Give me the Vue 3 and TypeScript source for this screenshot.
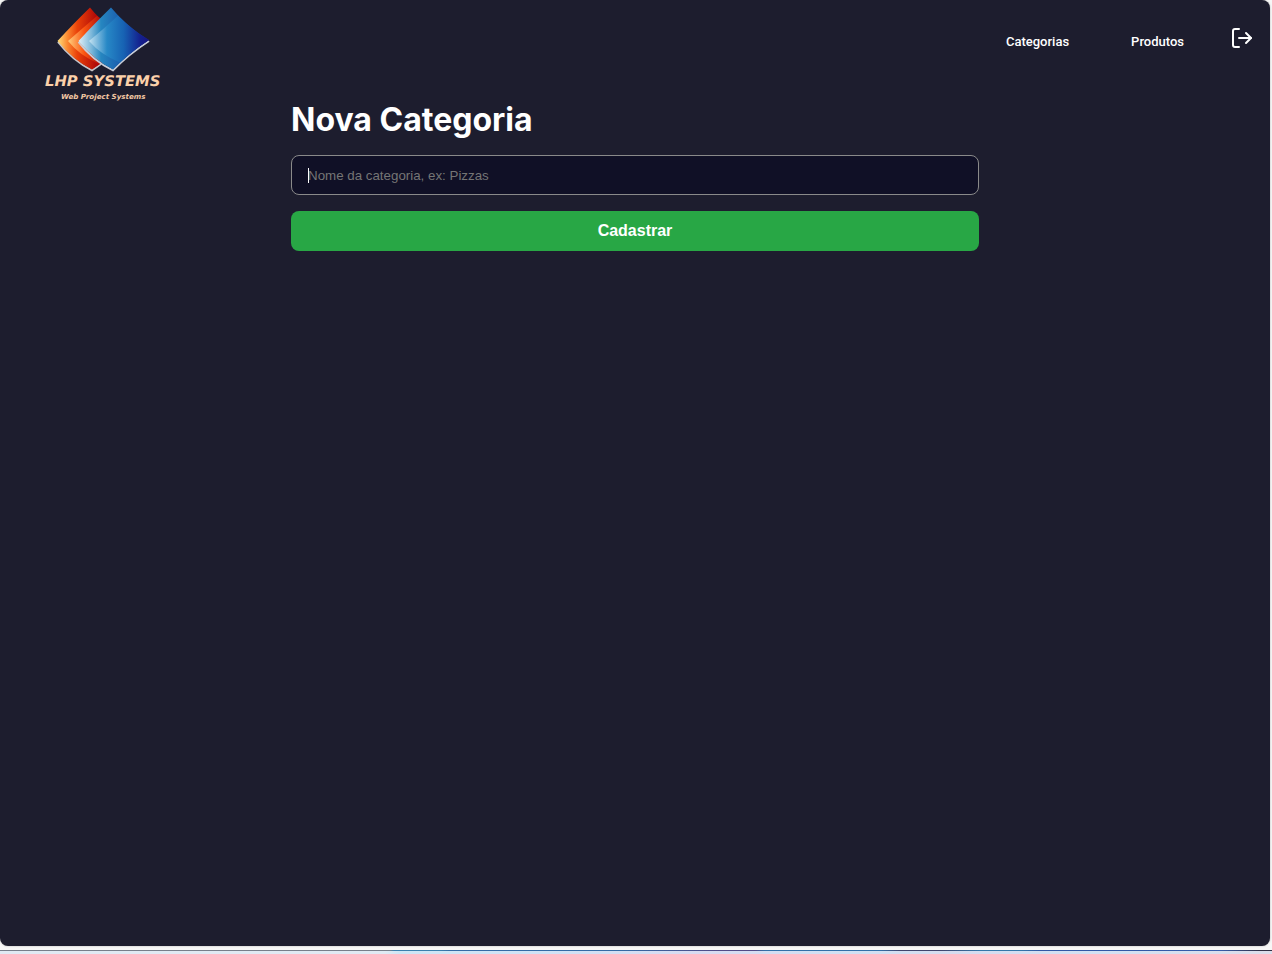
<script setup lang="ts">
import { ref } from 'vue'

const name = ref<string>('')
const links: string[] = ['Categorias', 'Produtos']
</script>

<template>
  <div class="screen">
    <div class="window">
      <header class="header">
        <svg class="logo" width="130" height="104" viewBox="35 0 130 104">
          <defs>
            <linearGradient id="redBack" x1="0" x2="1" y1="0" y2="0">
              <stop offset="0" stop-color="#ffe07c" />
              <stop offset="0.18" stop-color="#fb8a32" />
              <stop offset="0.36" stop-color="#ea4209" />
              <stop offset="0.72" stop-color="#b00808" />
            </linearGradient>
            <linearGradient id="redFront" x1="0" x2="1" y1="0" y2="0">
              <stop offset="0" stop-color="#ffd07d" />
              <stop offset="0.4" stop-color="#fb5612" />
              <stop offset="0.85" stop-color="#ad0508" />
            </linearGradient>
            <linearGradient id="blueBack" x1="0" x2="1" y1="0" y2="0">
              <stop offset="0" stop-color="#e0eef6" />
              <stop offset="0.18" stop-color="#7fb9da" />
              <stop offset="0.32" stop-color="#2686c0" />
              <stop offset="0.72" stop-color="#154aa6" />
              <stop offset="1" stop-color="#161b87" />
            </linearGradient>
            <linearGradient id="blueFront" x1="0" x2="1" y1="0" y2="0">
              <stop offset="0" stop-color="#c5e3f1" />
              <stop offset="0.3" stop-color="#2788c6" />
              <stop offset="0.58" stop-color="#1762b3" />
              <stop offset="0.85" stop-color="#14218f" />
              <stop offset="1" stop-color="#171582" />
            </linearGradient>
          </defs>
          <path d="M58 42Q73 61 92 70.300L101 64" fill="none" stroke="#c5c3c8" stroke-width="2" />
          <path d="M90 7.500Q75 22 57.500 41Q73 60 92 69.500L112 56V28Q99 19 90 7.500Z" fill="url(#redBack)" />
          <path d="M97 16Q84 27 68 41Q79 55 99 64L108 57V24Z" fill="url(#redFront)" />
          <path d="M78.500 42Q93 61 113 70.300Q129 54 149 41" fill="none" stroke="#c8cdd8" stroke-width="2" />
          <path d="M111 7.500Q96 22 78.500 41Q94 60 113 69.500Q129 53 149 40Q127 27 111 7.500Z" fill="url(#blueBack)" />
          <path d="M118 15.500Q106 27 89 41Q101 55 120 62.500Q134 49.500 149 40Q132 30 118 15.500Z" fill="url(#blueFront)" />
          <text class="brand" x="45" y="85.800" textLength="115.500" lengthAdjust="spacingAndGlyphs">LHP SYSTEMS</text>
          <text class="tagline" x="61" y="99.200" textLength="84.500" lengthAdjust="spacingAndGlyphs">Web Project Systems</text>
        </svg>
        <nav class="nav">
          <a v-for="link in links" :key="link" class="link">{{ link }}</a>
          <button class="logout" aria-label="Sair">
            <svg width="24" height="24" viewBox="0 0 24 24" fill="none" stroke="currentColor" stroke-width="2" stroke-linecap="round" stroke-linejoin="round">
              <path d="M9 21H5a2 2 0 0 1-2-2V5a2 2 0 0 1 2-2h4" />
              <path d="M16 17l5-5-5-5" />
              <path d="M21 12H9" />
            </svg>
          </button>
        </nav>
      </header>
      <main class="content">
        <h1>Nova Categoria</h1>
        <form class="form" @submit.prevent>
          <div class="field">
            <input v-model="name" type="text" placeholder="Nome da categoria, ex: Pizzas" />
            <span v-if="!name" class="caret"></span>
          </div>
          <button class="submit" type="submit">Cadastrar</button>
        </form>
      </main>
    </div>
    <div class="edge"></div>
    <div class="shadow-line"></div>
    <div class="desktop"></div>
  </div>
</template>

<style>
body {
  margin: 0;
  overflow: hidden;
}
</style>

<style scoped>
.screen {
  width: 1272px;
  height: 954px;
  background: #f7f7f7;
  overflow: hidden;
}
.window {
  width: 1270px;
  height: 946px;
  background: #1d1d2e;
  border-radius: 8px;
  box-shadow: 0 0 2px rgba(0, 0, 0, 0.3);
}
.header {
  display: flex;
  justify-content: space-between;
  height: 104px;
  padding: 0 16px 0 35px;
}
.logo {
  display: block;
}
.brand {
  font: italic bold 14.600px "DejaVu Sans", sans-serif;
  fill: #fbd0aa;
  text-rendering: geometricPrecision;
}
.tagline {
  font: italic bold 7px "DejaVu Sans", sans-serif;
  fill: #f2c7a3;
}
.nav {
  display: flex;
  height: 80px;
  align-items: center;
}
.link {
  font: 500 13px/20px Roboto, sans-serif;
  color: #fff;
  margin: 3px 62px 0 0;
}
.link:nth-child(2) {
  margin-right: 46px;
}
.logout {
  display: block;
  width: 24px;
  height: 24px;
  padding: 0;
  margin-top: -4px;
  border: 0;
  background: transparent;
  color: #fff;
}
.logout svg {
  display: block;
}
.content {
  width: 688px;
  margin-left: 291px;
}
h1 {
  margin: 0;
  height: 51px;
  font: 700 32px/31px Inter, sans-serif;
  color: #fff;
  white-space: nowrap;
}
.form {
  display: flex;
  flex-direction: column;
  gap: 16px;
}
.field {
  position: relative;
  height: 40px;
}
input {
  display: block;
  box-sizing: border-box;
  width: 100%;
  height: 40px;
  padding: 0 16px;
  border: 1px solid #8a8a8a;
  border-radius: 8px;
  outline: 0;
  background: #101026;
  color: #fff;
  font: 13.333px "Liberation Sans", Arial, sans-serif;
}
input::placeholder {
  color: #757575;
  opacity: 1;
}
.caret {
  position: absolute;
  left: 17px;
  top: 13px;
  width: 1px;
  height: 15px;
  background: #fff;
}
.submit {
  height: 40px;
  padding: 0;
  border: 0;
  border-radius: 8px;
  background: #28a745;
  color: #fff;
  font: bold 16px "Liberation Sans", Arial, sans-serif;
}
.edge {
  height: 4px;
}
.shadow-line {
  height: 1px;
  background: linear-gradient(90deg, #777f8a 0 390px, #3b80ad 394px 440px, #346ba5 450px 620px, #514b87 720px 755px, #3270a8 765px 880px, #40456d 900px 940px, #3477a9 980px 1020px, #3158a5 1040px 1140px, #365eac 1220px, #313044 1260px);
}
.desktop {
  height: 3px;
  background: linear-gradient(90deg, #e0eaf3 0 385px, #cee6f5 400px, #d0e2f5 550px, #d8dbf1 700px, #d0e1f3 850px, #d6dcef 950px, #d2e1f3 1100px, #dcddea);
}
</style>
